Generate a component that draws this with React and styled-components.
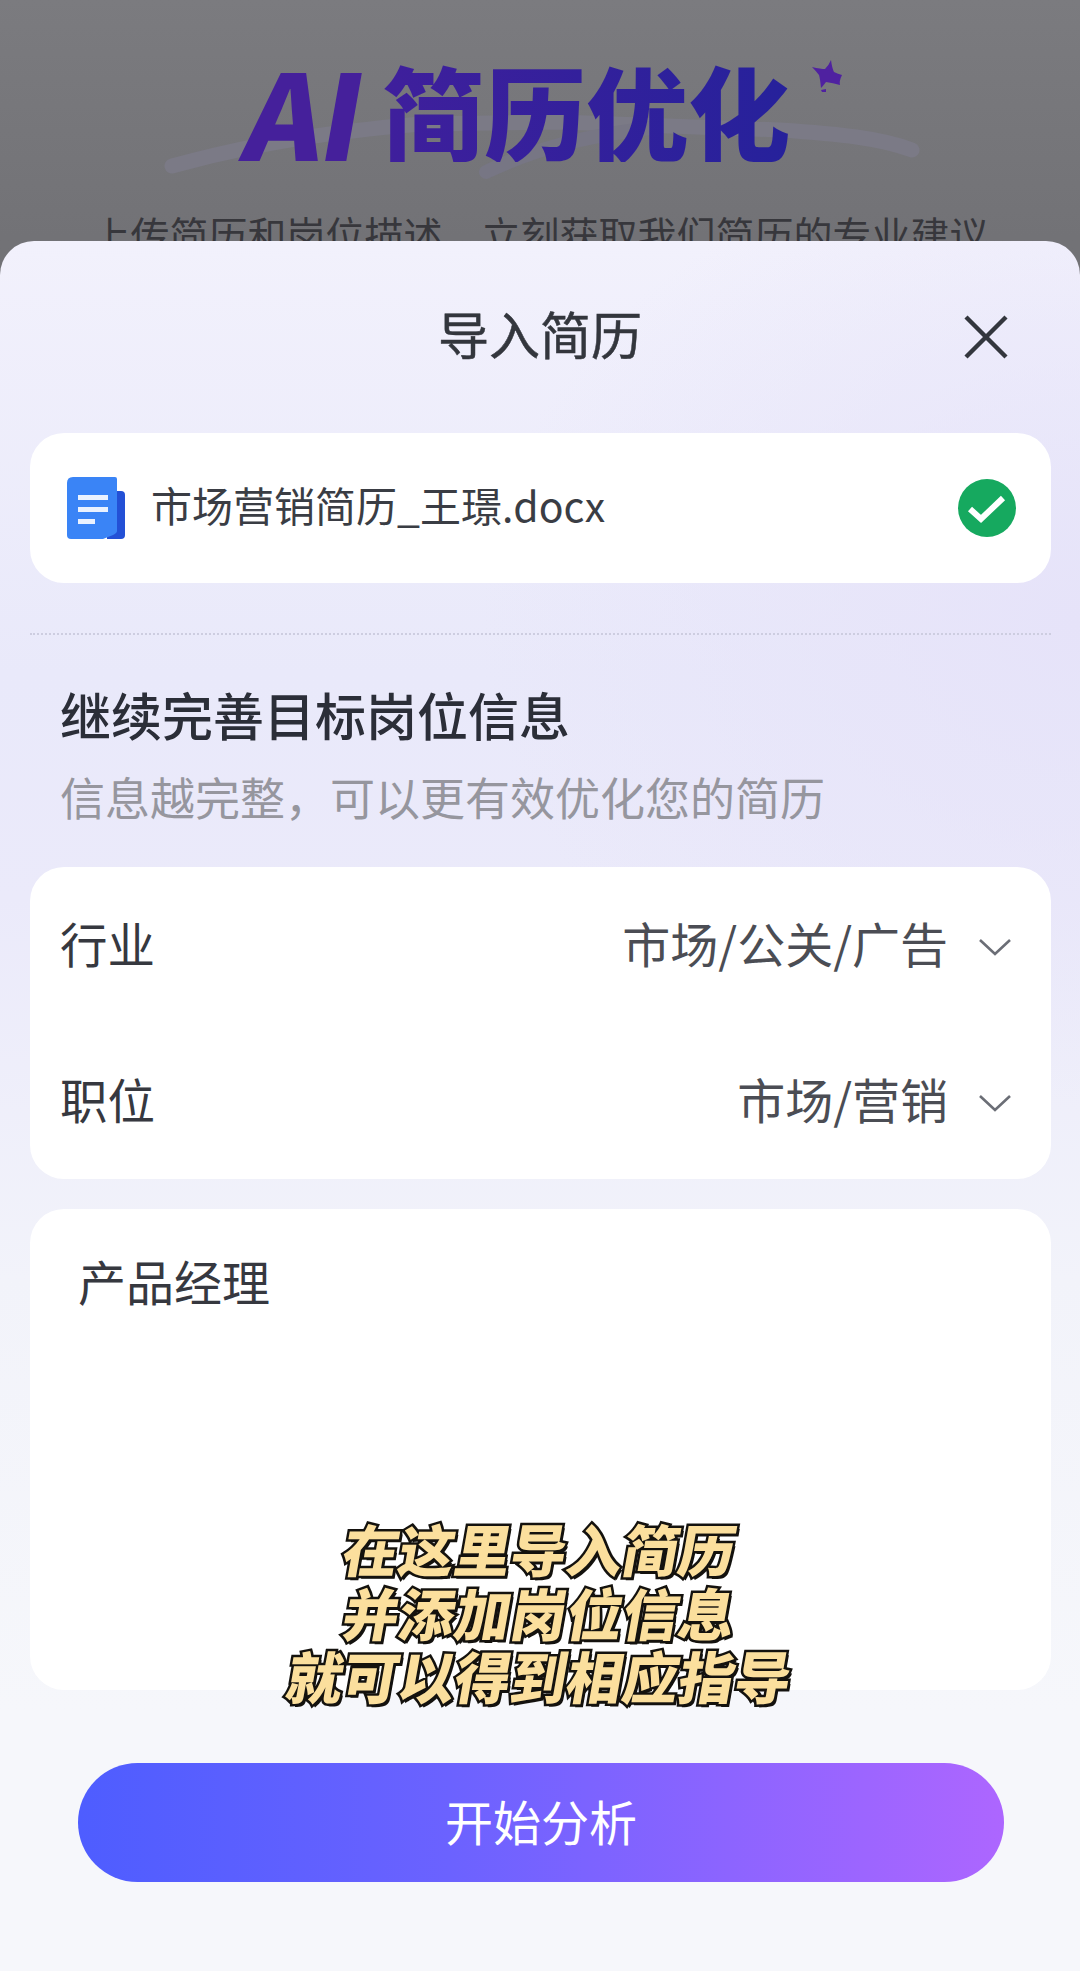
import React from "react";
import styled, { createGlobalStyle } from "styled-components";

const cjk = `"Noto Sans CJK SC", "Noto Sans", sans-serif`;

const GlobalStyle = createGlobalStyle`
  html, body {
    margin: 0;
    padding: 0;
    background: #77777b;
  }
  * {
    box-sizing: border-box;
  }
`;

const rows = [
  { label: "行业", value: "市场/公关/广告" },
  { label: "职位", value: "市场/营销" },
];

const captionLines = ["在这里导入简历", "并添加岗位信息", "就可以得到相应指导"];

const Chevron = () => (
  <ChevronIcon viewBox="0 0 34 20">
    <path d="M2 3 L17 17 L32 3" fill="none" stroke="#6b6e76" strokeWidth="2.6" />
  </ChevronIcon>
);

const App = () => {
  return (
    <Page>
      <GlobalStyle />
      <Hero>
        <Swoosh viewBox="0 0 1080 241">
          <path d="M172 166 C260 142 330 132 420 124 L560 122 L780 130 C840 134 880 138 912 150" fill="none" stroke="#7b7a86" strokeWidth="15" strokeLinecap="round" />
          <path d="M486 172 C540 146 590 136 650 128" fill="none" stroke="#777684" strokeWidth="14" strokeLinecap="round" />
        </Swoosh>
        <BrandRow>
          <BrandLatin>AI</BrandLatin>
          <BrandText>简历优化</BrandText>
          <Star viewBox="0 0 32 32">
            <path d="M20 0 Q21 8 23 12 Q27 14 31 15 Q28 21 29 25 Q22 23 15 22 Q12 26 10 28 Q9 18 8 15 Q4 10 1 7 Q10 9 14 9 Q18 5 20 0 Z" fill="#4f21a0" />
            <path d="M10 30 L15 29 L15 32 L11 32 Z" fill="#4f21a0" />
          </Star>
        </BrandRow>
        <Tagline>上传简历和岗位描述，立刻获取我们简历的专业建议</Tagline>
      </Hero>

      <Sheet>
        <SheetHeader>
          <span />
          <SheetTitle>导入简历</SheetTitle>
          <CloseIcon viewBox="0 0 44 44">
            <path d="M2 2 L42 42 M42 2 L2 42" fill="none" stroke="#33363d" strokeWidth="4.4" />
          </CloseIcon>
        </SheetHeader>

        <FileCard>
          <DocIcon viewBox="0 0 58 62">
            <path d="M40 14 H54 Q58 14 58 18 V58 Q58 62 54 62 H40 Z" fill="#2350d6" />
            <path d="M6 0 H48 Q50 0 50 2 V54 Q50 56 46 58 L36 62 H4 Q0 62 0 58 V6 Q0 0 6 0 Z" fill="#3a84f6" />
            <rect x="11" y="18" width="30" height="5" fill="#eaf2ff" />
            <rect x="11" y="30" width="30" height="5" fill="#eaf2ff" />
            <rect x="11" y="42" width="17" height="5" fill="#eaf2ff" />
          </DocIcon>
          <FileName>市场营销简历_王璟.docx</FileName>
          <CheckIcon viewBox="0 0 58 58">
            <circle cx="29" cy="29" r="29" fill="#16a95f" />
            <path d="M12 30 L23 40 L45 19" fill="none" stroke="#fff" strokeWidth="6" />
          </CheckIcon>
        </FileCard>

        <DottedLine />

        <SectionTitle>继续完善目标岗位信息</SectionTitle>
        <SectionHint>信息越完整，可以更有效优化您的简历</SectionHint>

        <SelectCard>
          {rows.map((row) => (
            <SelectRow key={row.label}>
              <RowLabel>{row.label}</RowLabel>
              <RowValue>{row.value}</RowValue>
              <Chevron />
            </SelectRow>
          ))}
        </SelectCard>

        <TextCard>产品经理</TextCard>

        <StartButton>开始分析</StartButton>
      </Sheet>

      <Caption>
        {captionLines.map((line) => (
          <CaptionLine key={line}>{line}</CaptionLine>
        ))}
      </Caption>
    </Page>
  );
};

export default App;

const Page = styled.div`
  position: relative;
  width: 1080px;
  height: 1971px;
  overflow: hidden;
  background: linear-gradient(180deg, #7b7b7f 0%, #727276 12%, #6e6e72 100%);
  font-family: ${cjk};
`;

const Hero = styled.div`
  position: relative;
  height: 241px;
  overflow: hidden;
  padding-top: 58px;
`;

const Swoosh = styled.svg`
  position: absolute;
  left: 0;
  top: 0;
  width: 1080px;
  height: 241px;
`;

const BrandRow = styled.div`
  position: relative;
  display: flex;
  align-items: center;
  height: 104px;
  padding-left: 248px;
`;

const BrandLatin = styled.span`
  display: inline-block;
  font-size: 118px;
  line-height: 104px;
  font-weight: 800;
  letter-spacing: -2px;
  color: #45209b;
  margin-right: 19px;
  transform: skewX(-10deg);
`;

const BrandText = styled.span`
  font-size: 102px;
  line-height: 104px;
  font-weight: 900;
  background: linear-gradient(90deg, #3f1f9c 0%, #26219b 100%);
  -webkit-background-clip: text;
  background-clip: text;
  color: transparent;
`;

const Star = styled.svg`
  width: 32px;
  height: 32px;
  margin: -68px 0 0 21px;
`;

const Tagline = styled.div`
  margin-top: 46px;
  text-align: center;
  font-size: 39px;
  line-height: 50px;
  color: #37373c;
  white-space: nowrap;
`;

const Sheet = styled.div`
  height: 1730px;
  padding: 0 29px 0 30px;
  border-radius: 34px 34px 0 0;
  background:
    radial-gradient(600px 480px at 100% 22%, #e6e3f9 0%, rgba(230, 227, 249, 0) 100%),
    linear-gradient(180deg, #f2f1fc 0%, #e9e9fa 25%, #ebeafa 38%, #f2f3fa 60%, #f6f7fb 85%);
`;

const SheetHeader = styled.div`
  display: grid;
  grid-template-columns: 1fr auto 1fr;
  align-items: center;
  height: 192px;
  padding-right: 43px;
`;

const SheetTitle = styled.div`
  font-size: 51px;
  font-weight: 400;
  color: #33363d;
  transform: translate(21px, -4px);
  -webkit-text-stroke: 0.5px #33363d;
`;

const CloseIcon = styled.svg`
  justify-self: end;
  width: 44px;
  height: 44px;
`;

const FileCard = styled.div`
  display: flex;
  align-items: center;
  height: 150px;
  padding: 0 35px 0 37px;
  background: #fff;
  border-radius: 34px;
`;

const DocIcon = styled.svg`
  flex: none;
  width: 58px;
  height: 62px;
`;

const FileName = styled.div`
  flex: 1;
  margin-left: 26px;
  margin-top: -8px;
  font-size: 41px;
  color: #3a3d44;
  white-space: nowrap;
`;

const CheckIcon = styled.svg`
  flex: none;
  width: 58px;
  height: 58px;
`;

const DottedLine = styled.div`
  margin-top: 50px;
  border-top: 2px dotted #cdcde0;
`;

const SectionTitle = styled.div`
  margin: 49px 0 0 30px;
  font-size: 51px;
  line-height: 60px;
  font-weight: 500;
  color: #2b2e38;
`;

const SectionHint = styled.div`
  margin: 23px 0 0 30px;
  font-size: 45px;
  line-height: 60px;
  color: #96969e;
  white-space: nowrap;
`;

const SelectCard = styled.div`
  margin-top: 40px;
  background: #fff;
  border-radius: 34px;
`;

const SelectRow = styled.div`
  display: flex;
  align-items: center;
  height: 156px;
  padding: 0 39px 6px 30px;
`;

const RowLabel = styled.span`
  flex: 1;
  font-size: 47.5px;
  color: #36383f;
`;

const RowValue = styled.span`
  font-size: 48px;
  color: #4b4d54;
`;

const ChevronIcon = styled.svg`
  width: 34px;
  height: 20px;
  margin-left: 30px;
  margin-top: 10px;
`;

const TextCard = styled.div`
  height: 481px;
  margin-top: 30px;
  padding: 41px 48px;
  background: #fff;
  border-radius: 34px;
  font-size: 48px;
  line-height: 60px;
  color: #36383f;
`;

const StartButton = styled.button`
  display: block;
  width: 926px;
  height: 119px;
  margin: 73px 0 0 48px;
  padding: 0 0 6px;
  border: none;
  border-radius: 60px;
  background: linear-gradient(90deg, #4e5dff 0%, #6b62ff 40%, #ad66ff 100%);
  font-family: ${cjk};
  font-size: 48px;
  color: #fff;
`;

const Caption = styled.div`
  position: absolute;
  left: 0;
  right: 0;
  top: 1516px;
  font-size: 56px;
  line-height: 63.5px;
  font-weight: 900;
  color: #fbdf9d;
  -webkit-text-stroke: 5px #14120e;
  paint-order: stroke fill;
  text-shadow: 3px 3px 0 #14120e;
`;

const CaptionLine = styled.div`
  text-align: center;
  transform: skewX(-10deg);
`;
